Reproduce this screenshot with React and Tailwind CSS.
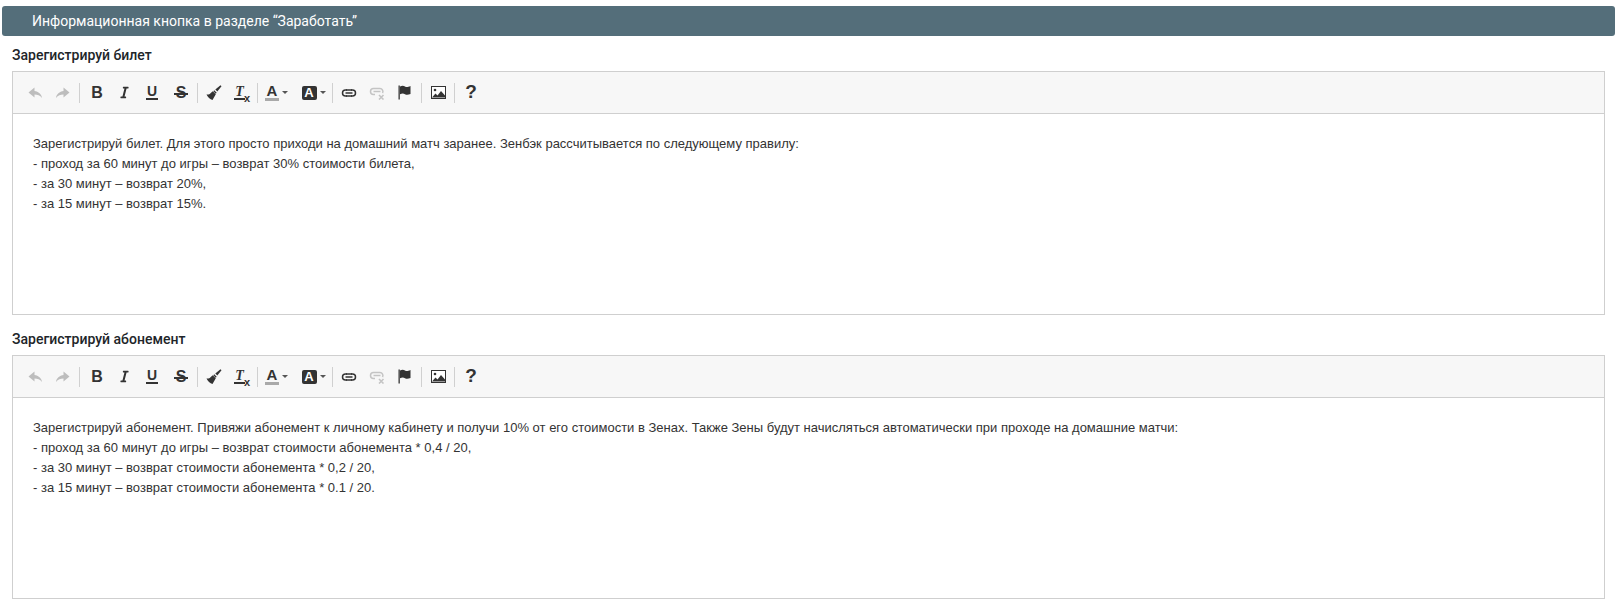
import React from "react";
import { FaItalic } from "react-icons/fa";

function Sep({ className }) {
  return <div className={`w-px h-[20px] bg-[#d0d0d0] shrink-0 ${className || ""}`} />;
}

function Btn({ className, children }) {
  return (
    <div className={`flex items-center justify-center h-[24px] shrink-0 text-[#333] ${className}`}>
      {children}
    </div>
  );
}

function Caret() {
  return <span className="ml-[3px] w-0 h-0 border-x-[3px] border-x-transparent border-t-[3px] border-t-[#555]" />;
}

function UndoIcon({ flip }) {
  return (
    <svg width="15" height="12" viewBox="0 0 15 12" fill="#bdbdbd" className={flip ? "-scale-x-100" : ""}>
      <path d="M6.500 0.500L0.500 5.500l6 5V7.500c3 0 5.500 .8 7.500 3.500 -.5-4-3.500-6.500-7.500-7z" />
    </svg>
  );
}

function BrushIcon() {
  return (
    <svg width="16" height="16" viewBox="0 0 16 16" fill="#333">
      <path d="M15.500 1.200l-1-1-5.200 4.200 2 2z" />
      <path d="M8.300 5.300l2.400 2.400-1 1-2.400-2.400z" />
      <path d="M6.800 6.200l3 3-3.300 5.800c-2.300-.6-5-3-6-5.500 1.600 .4 3.500-.4 4-1.200z" />
    </svg>
  );
}

function LinkIcon({ off }) {
  const c = off ? "#c4c4c4" : "#333";
  return (
    <svg width="16" height="14" viewBox="0 0 16 14" fill="none" stroke={c} strokeWidth="1.500">
      <path d={off ? "M6 8.500H4.500a3 3 0 0 1 0-6H11a3 3 0 0 1 2.500 4.500" : "M6 10H4.500a3 3 0 0 1 0-6H6"} />
      {off ? (
        <>
          <path d="M4.500 5.500h7" />
          <path d="M10 9l4.500 4.500M14.500 9L10 13.500" strokeWidth="1.600" />
        </>
      ) : (
        <>
          <path d="M10 4h1.500a3 3 0 0 1 0 6H10" />
          <path d="M4.500 7h7" />
          <path d="M5 4h6M5 10h6" />
        </>
      )}
    </svg>
  );
}

function FlagIcon() {
  return (
    <svg width="14" height="15" viewBox="0 0 14 15" fill="#333">
      <rect x="0.500" y="0.500" width="1.300" height="14" />
      <path d="M2 1.500c2-1 3.500-1 5 0s3 .5 5.500-.5v8c-2.500 1-4 1-5.500 .2s-3-.8-5 0z" />
    </svg>
  );
}

function ImageIcon() {
  return (
    <svg width="15" height="13" viewBox="0 0 15 13">
      <rect x="0.500" y="0.500" width="14" height="12" fill="#fff" stroke="#333" />
      <circle cx="4" cy="4" r="1.300" fill="#333" />
      <path d="M1 11.500l3.500-4 2 2 3.500-4.500 4 4.500v2z" fill="#333" />
    </svg>
  );
}

function Toolbar() {
  return (
    <div className="flex items-center h-[42px] pl-[9px] bg-[#f7f7f7] border-b border-[#cfcfcf]">
      <Btn className="w-[27px]"><UndoIcon /></Btn>
      <Btn className="w-[27px]"><UndoIcon flip /></Btn>
      <Sep className="ml-[3px]" />
      <Btn className="w-[28px] ml-[3px] text-[16px] font-bold font-['Liberation_Sans',sans-serif]">B</Btn>
      <Btn className="w-[26px]"><FaItalic className="text-[13px]" /></Btn>
      <Btn className="w-[30px] text-[14px] font-bold font-['Liberation_Sans',sans-serif]">
        <span className="border-b-2 border-[#333] leading-[13px] px-[1px]">U</span>
      </Btn>
      <Btn className="w-[28px] relative text-[16px] font-bold font-['Liberation_Sans',sans-serif]">
        S
        <span className="absolute left-[7px] right-[7px] top-[12px] h-[2px] bg-[#333]" />
      </Btn>
      <Sep className="ml-[2px]" />
      <Btn className="w-[32px]"><BrushIcon /></Btn>
      <Btn className="w-[24px] relative text-[14px] font-bold italic font-['Liberation_Serif',serif]">
        <span className="border-b-2 border-[#333] leading-[12px] px-[1px] mr-[5px]">T</span>
        <span className="absolute left-[14px] top-[9px] text-[11px] not-italic font-bold font-['Liberation_Sans',sans-serif]">x</span>
      </Btn>
      <Sep className="ml-[3px]" />
      <Btn className="w-[37px]">
        <span className="border-b-[3px] border-[#a9a9a9] leading-[14px] text-[15px] font-bold px-[2px] font-['Liberation_Sans',sans-serif]">A</span>
        <Caret />
      </Btn>
      <Btn className="w-[37px]">
        <span className="bg-[#333] text-white w-[15px] h-[14px] rounded-[2px] flex items-center justify-center text-[13px] font-bold font-['Liberation_Sans',sans-serif]">A</span>
        <Caret />
      </Btn>
      <Sep />
      <Btn className="w-[32px]"><LinkIcon /></Btn>
      <Btn className="w-[24px]"><LinkIcon off /></Btn>
      <Btn className="w-[32px]"><FlagIcon /></Btn>
      <Sep />
      <Btn className="w-[32px]"><ImageIcon /></Btn>
      <Sep />
      <Btn className="w-[32px] text-[19px] font-bold font-['Liberation_Sans',sans-serif]">?</Btn>
    </div>
  );
}

function Editor({ title, lines }) {
  return (
    <div>
      <div className="text-[14px] font-medium leading-[20px] text-[#212529]">{title}</div>
      <div className="mt-[6px] border border-[#cfcfcf] bg-white">
        <Toolbar />
        <div className="h-[200px] pl-[20px] pt-[20px] text-[13px] leading-[20px] text-[#333] font-['Liberation_Sans',sans-serif]">
          {lines.map((l) => (
            <div key={l}>{l}</div>
          ))}
        </div>
      </div>
    </div>
  );
}

export default function App() {
  return (
    <div className="h-[608px] bg-white font-['Roboto',sans-serif] pt-[6px]">
      <div className="mx-[2px] h-[30px] bg-[#546e7a] rounded-[3px] flex items-center pl-[30px] text-white text-[14px]">
        Информационная кнопка в разделе “Заработать”
      </div>
      <div className="mx-[12px] mt-[9px] flex flex-col gap-[14px]">
        <Editor
          title="Зарегистрируй билет"
          lines={[
            "Зарегистрируй билет. Для этого просто приходи на домашний матч заранее. Зенбэк рассчитывается по следующему правилу:",
            "- проход за 60 минут до игры – возврат 30% стоимости билета,",
            "- за 30 минут – возврат 20%,",
            "- за 15 минут – возврат 15%.",
          ]}
        />
        <Editor
          title="Зарегистрируй абонемент"
          lines={[
            "Зарегистрируй абонемент. Привяжи абонемент к личному кабинету и получи 10% от его стоимости в Зенах. Также Зены будут начисляться автоматически при проходе на домашние матчи:",
            "- проход за 60 минут до игры – возврат стоимости абонемента * 0,4 / 20,",
            "- за 30 минут – возврат стоимости абонемента * 0,2 / 20,",
            "- за 15 минут – возврат стоимости абонемента * 0.1 / 20.",
          ]}
        />
      </div>
    </div>
  );
}
